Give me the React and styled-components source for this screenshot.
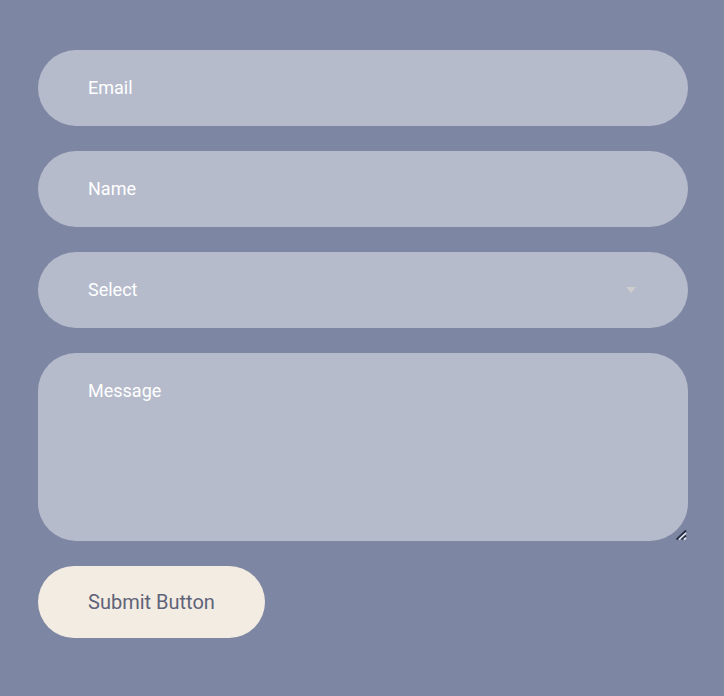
import React from "react";
import styled, { createGlobalStyle, css } from "styled-components";

const GlobalStyle = createGlobalStyle`
  *, *::before, *::after { box-sizing: border-box; }
  body {
    margin: 0;
    background: #7d86a2;
    font-family: Roboto, "Liberation Sans", sans-serif;
  }
`;

const Page = styled.main`
  padding: 50px 36px 50px 38px;
`;

const Form = styled.form`
  display: flex;
  flex-direction: column;
  align-items: flex-start;
  gap: 25px;
`;

const field = css`
  display: block;
  width: 100%;
  margin: 0;
  border: 0;
  outline: 0;
  border-radius: 38px;
  background-color: #b6bbcc;
  color: #ffffff;
  font-family: inherit;
  font-size: 18px;
  line-height: 26px;
  &::placeholder {
    color: #ffffff;
    opacity: 1;
  }
`;

const TextInput = styled.input`
  ${field}
  height: 76px;
  padding: 0 50px 2px;
`;

const FieldStack = styled.div`
  display: grid;
  width: 100%;
  align-items: center;
  & > * { grid-area: 1 / 1; }
`;

const Select = styled.select`
  ${field}
  height: 76px;
  padding: 0 50px;
  appearance: none;
`;

const Arrow = styled.svg`
  justify-self: end;
  width: 10px;
  height: 6px;
  margin-right: 52px;
  pointer-events: none;
`;

const MessageBox = styled.textarea`
  ${field}
  height: 188px;
  padding: 25px 50px;
  resize: vertical;
  &::-webkit-resizer { background: transparent; }
`;

const ResizeGrip = styled.svg`
  justify-self: end;
  align-self: end;
  width: 12px;
  height: 12px;
  pointer-events: none;
`;

const SubmitButton = styled.button`
  border: 0;
  border-radius: 36px;
  padding: 22px 50px;
  background: #f3ece2;
  color: #5f6379;
  font-family: inherit;
  font-size: 20px;
  line-height: 28px;
  cursor: pointer;
`;

export default function App() {
  return (
    <>
      <GlobalStyle />
      <Page>
        <Form onSubmit={(event) => event.preventDefault()}>
          <TextInput type="email" name="email" placeholder="Email" aria-label="Email" />
          <TextInput type="text" name="name" placeholder="Name" aria-label="Name" />
          <FieldStack>
            <Select name="select" aria-label="Select" defaultValue="">
              <option value="">Select</option>
            </Select>
            <Arrow viewBox="0 0 10 6" aria-hidden="true">
              <path d="M0 0H10L5 6Z" fill="#cccccc" />
            </Arrow>
          </FieldStack>
          <FieldStack>
            <MessageBox name="message" placeholder="Message" aria-label="Message" />
            <ResizeGrip viewBox="0 0 12 12" aria-hidden="true" fill="none">
              <path d="M0.5 10.5L10 1.5M5.5 10.5L10 6.5" stroke="#252b40" strokeWidth="1.8" />
              <path d="M3 10.5L10 4M8 10.5L10 9" stroke="#e4e7ee" strokeWidth="1.6" />
            </ResizeGrip>
          </FieldStack>
          <SubmitButton type="submit">Submit Button</SubmitButton>
        </Form>
      </Page>
    </>
  );
}
